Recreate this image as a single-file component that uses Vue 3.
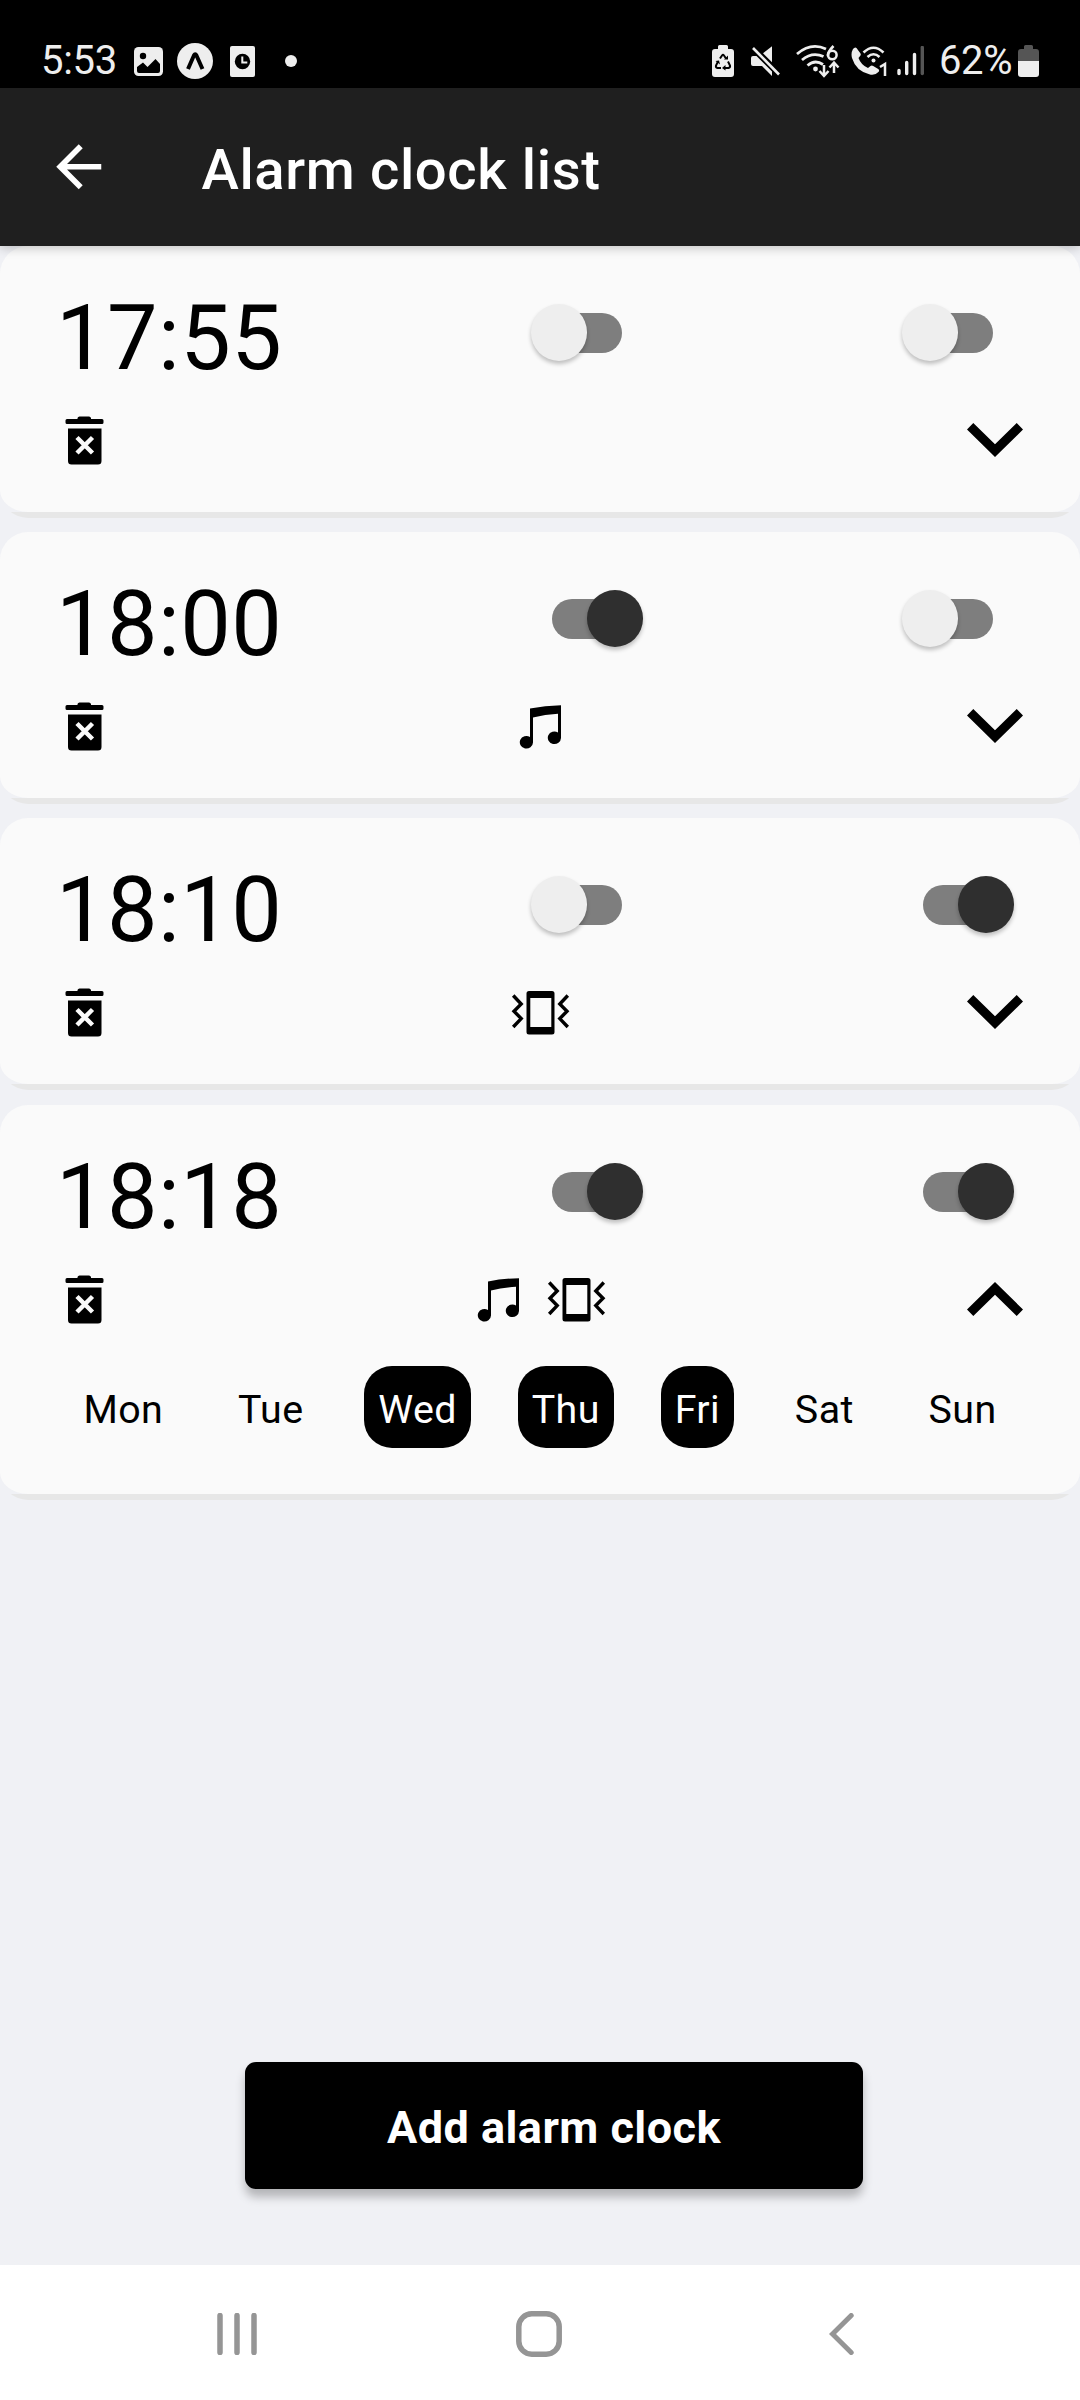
<script setup>
import { ref } from 'vue'

const alarms = ref([
  { time: '17:55', sound: false, vibrate: false, open: false },
  { time: '18:00', sound: true, vibrate: false, open: false },
  { time: '18:10', sound: false, vibrate: true, open: false },
  { time: '18:18', sound: true, vibrate: true, open: true, days: ['Wed', 'Thu', 'Fri'] },
])
const week = ['Mon', 'Tue', 'Wed', 'Thu', 'Fri', 'Sat', 'Sun']
</script>

<template>
  <div class="screen">
    <div class="status">
      <span class="clock">5:53</span>
      <svg class="s-image" width="29" height="29" viewBox="0 0 29 29">
        <rect width="29" height="29" rx="4.500" fill="#eee" />
        <circle cx="9" cy="9" r="3.200" fill="#000" />
        <path d="M3 20 9 15.500 13.500 20 21.500 12 26 17v7q0 2-2 2H5q-2 0-2-2z" fill="#000" />
      </svg>
      <svg class="s-expo" width="36" height="36" viewBox="0 0 36 36">
        <circle cx="18" cy="18" r="18" fill="#eee" />
        <path d="M11 26 17 12.300q1.200-2 2.400 0L25.500 26" fill="none" stroke="#000" stroke-width="4" />
      </svg>
      <svg class="s-app" width="25" height="31" viewBox="0 0 25 31">
        <rect width="25" height="31" rx="2" fill="#eee" />
        <circle cx="12.500" cy="15.500" r="7.700" fill="#000" />
        <path d="M12.300 10.500v6h5" fill="none" stroke="#eee" stroke-width="2" />
      </svg>
      <i class="s-dot"></i>
      <span class="fill"></span>
      <svg width="22" height="32" viewBox="0 0 22 32">
        <path d="M6 1.500Q6 0 7.500 0h7Q16 0 16 1.500V4h3q3 0 3 3v22q0 3-3 3H3q-3 0-3-3V7q0-3 3-3h3z" fill="#eee" />
        <path d="M8 13.500 10 10.500q1-1.300 2 0l2 3M16 16.500l2 4q.5 2-1.500 2.500h-4M9 23H5.500q-2-.5-1.500-2.500l2-4" fill="none" stroke="#000" stroke-width="2" />
        <path d="M12 14.500h4v-4zM13.500 20v5.500L10 23zM3.500 16l3.500-.5 1 4z" fill="#000" />
      </svg>
      <svg class="s-mute" width="30" height="30" viewBox="0 0 30 30">
        <path d="M0 12q0-2 2-2h3.500L21 25.500V30L11 20H2q-2 0-2-2zM12 7.200 21 .3v15.900z" fill="#eee" />
        <path d="M2 2 28 28.500" stroke="#eee" stroke-width="2.600" />
      </svg>
      <svg class="s-wifi" width="44" height="33" viewBox="0 0 44 33">
        <g fill="none" stroke="#eee" stroke-width="2.800">
          <path d="M1 9Q15-3 30 4" /><path d="M6 15Q16 6.500 27.500 11.500" /><path d="M11.500 20.500Q19 14 27 19.500" />
          <path d="M28 20v10M23.500 26l4.500 5 4.500-5M38 28V18M33.500 22.500l4.500-5 4.500 5" stroke-width="2.500" />
          <path d="M37.500 1Q31.500 7 32 11" stroke-width="2.600" /><circle cx="36.300" cy="10" r="4.300" stroke-width="2.500" />
        </g>
        <circle cx="19.500" cy="24" r="2.400" fill="#eee" />
      </svg>
      <svg class="s-call" width="37" height="32" viewBox="0 0 37 32">
        <path d="M2 4Q4 1.500 5.500 3l4 5.500q.8 1.500-.8 3L7.500 13q2.500 7 9.500 10l2.500-2q1.300-1 2.700 0l5 3q1.600 1.200.5 2.700-4 4.300-9.500 2.500Q5 26 1 13-.3 8 2 4z" fill="#eee" />
        <g fill="none" stroke="#eee" stroke-width="2.600">
          <path d="M12.500 7.500q10-9.500 20 0M16.500 12q6-5.500 12 0" />
        </g>
        <circle cx="22.500" cy="15.500" r="2" fill="#eee" />
        <path d="M29 22 34 19v12" fill="none" stroke="#eee" stroke-width="2.500" />
      </svg>
      <svg class="s-signal" width="28" height="30" viewBox="0 0 28 30">
        <g stroke="#eee" stroke-width="3.400" stroke-linecap="round">
          <path d="M2 24.500v3M9.700 16.500v11M17.500 8.500v19" /><path d="M25.300 1.500v26" stroke="#555" />
        </g>
      </svg>
      <span class="percent">62%</span>
      <svg width="21" height="32" viewBox="0 0 21 32">
        <path d="M6 1.500Q6 0 7.500 0h6Q15 0 15 1.500V4h3q3 0 3 3v9H0V7q0-3 3-3h3z" fill="#555" />
        <path d="M0 16h21v13q0 3-3 3H3q-3 0-3-3z" fill="#eee" />
      </svg>
    </div>

    <header class="bar">
      <svg class="back" viewBox="0 0 24 24"><path d="M20 11H7.830l5.590-5.590L12 4l-8 8 8 8 1.410-1.410L7.830 13H20z" fill="#fff" /></svg>
      <h1>Alarm clock list</h1>
    </header>

    <main class="list">
      <section v-for="a in alarms" :key="a.time" class="card" :class="{ open: a.open }">
        <div class="face">
          <div class="top">
            <span class="time">{{ a.time }}</span>
            <button class="switch" :class="{ on: a.sound }" @click="a.sound = !a.sound"><i class="knob"></i></button>
            <button class="switch" :class="{ on: a.vibrate }" @click="a.vibrate = !a.vibrate"><i class="knob"></i></button>
          </div>
          <div class="tools">
            <svg class="trash" width="39" height="49" viewBox="0 0 39 49">
              <path d="M12.500 3V2Q13 .5 14.500.5h9.500Q25.500.5 26 2v1h11q1.500 0 1.500 1.500v2Q38.500 8 37 8H2Q.5 8 .5 6.500v-2Q.5 3 2 3zM3 12.500h33.500V45q0 3.500-3.500 3.500H6.500Q3 48.500 3 45z" />
              <path d="M12 21.500 27.500 37M27.500 21.500 12 37" stroke="#fafafa" stroke-width="4.500" />
            </svg>
            <div class="modes" :class="{ pair: a.sound && a.vibrate }">
              <svg v-if="a.sound" width="78" height="44" viewBox="0 0 78 44">
                <path d="M29 3.500Q44 .4 60 .2V33a6.600 6.300 0 1 1-3-5.500V8.800Q44 9.500 32 12.500V37.500a6.600 6.300 0 1 1-3-5.500z" />
              </svg>
              <svg v-if="a.vibrate" width="78" height="44" viewBox="0 0 78 44">
                <path fill-rule="evenodd" d="M28 0h23q2.500 0 2.500 2.500v38.500q0 2.500-2.500 2.500H28q-2.500 0-2.500-2.500V2.500Q25.500 0 28 0zM29.300 7v29h21V7z" />
                <path d="M12.200 4.500 20.200 13l-7.200 7.300 7.200 7.300-8 8.400M66.800 4.500 58.800 13l7.200 7.300-7.200 7.300 8 8.400" fill="none" stroke="#000" stroke-width="3.400" />
              </svg>
            </div>
            <svg class="chevron" width="56" height="34" viewBox="0 0 56 34" @click="a.open = !a.open">
              <path d="M6.300 0 0 6.500 28 34 56 6.500 49.700 0 28 21.300z" />
            </svg>
          </div>
          <div v-if="a.open" class="days">
            <span v-for="d in week" :key="d" class="day" :class="{ picked: a.days?.includes(d) }">{{ d }}</span>
          </div>
        </div>
      </section>
    </main>

    <footer class="actions"><button class="add">Add alarm clock</button></footer>

    <nav class="nav">
      <svg width="40" height="42" viewBox="0 0 40 42"><path d="M3 2.500v37M20 2.500v37M37 2.500v37" stroke="#959595" stroke-width="5.500" stroke-linecap="round" /></svg>
      <svg class="home" width="46" height="46" viewBox="0 0 46 46"><rect x="2.800" y="2.800" width="40.400" height="40.400" rx="13" fill="none" stroke="#959595" stroke-width="5.500" /></svg>
      <svg width="25" height="42" viewBox="0 0 25 42"><path d="M22.200 2.500 3.500 21l18.700 18.500" fill="none" stroke="#959595" stroke-width="5" stroke-linecap="round" /></svg>
    </nav>
  </div>
</template>

<style>
body { margin: 0; }
</style>

<style scoped>
.screen {
  display: flex;
  flex-direction: column;
  width: 1080px;
  height: 2400px;
  overflow: hidden;
  background: #f0f1f5;
  color: #000;
  font-family: Roboto, "Liberation Sans", sans-serif;
}
svg { display: block; flex: none; }
button { border: 0; padding: 0; font-family: inherit; }

.status {
  display: flex;
  align-items: center;
  box-sizing: border-box;
  height: 88px;
  padding: 34px 41px 0 41px;
  background: #000;
  color: #eee;
  font-size: 40px;
}
.clock { width: 93px; line-height: 54px; letter-spacing: -0.3px; }
.s-expo { margin-left: 14px; }
.s-app { margin-left: 17px; }
.s-dot { width: 12px; height: 12px; margin-left: 30px; border-radius: 50%; background: #eee; }
.fill { flex: 1; }
.s-mute { margin-left: 17px; }
.s-wifi { margin-left: 15px; }
.s-call { margin-left: 11px; }
.s-signal { margin-left: 9px; }
.percent { width: 79px; margin-left: 14px; line-height: 54px; letter-spacing: -0.4px; white-space: nowrap; }

.bar {
  position: relative;
  z-index: 1;
  display: flex;
  align-items: center;
  height: 158px;
  padding-left: 45px;
  background: #1f1f1f;
  box-shadow: 0 2px 10px rgba(0, 0, 0, 0.22);
}
.back { width: 67.500px; height: 67.500px; }
h1 {
  margin: 5px 0 0 89px;
  color: #fff;
  font-size: 56.250px;
  font-weight: 500;
  line-height: 66px;
  letter-spacing: 0.6px;
}

.list { display: flex; flex-direction: column; gap: 14px; }
.card {
  border-radius: 28px;
  background: linear-gradient(transparent calc(100% - 6px), #e7e7e7 0);
}
.card.open { margin-top: 1px; }
.face {
  box-sizing: border-box;
  height: 266px;
  margin-bottom: 6px;
  padding-top: 36px;
  border-radius: 28px / 28px 28px 22px 22px;
  background: #fafafa;
}
.open .face { height: 389px; }
.top { display: flex; align-items: center; height: 101px; padding-left: 56px; }
.time {
  width: 474px;
  padding-top: 12px;
  font-size: 90px;
  line-height: 106px;
  letter-spacing: 0.4px;
}
.switch {
  position: relative;
  width: 114px;
  height: 57px;
  background: none;
}
.switch::before {
  content: "";
  position: absolute;
  inset: 8.500px 22px;
  border-radius: 20px;
  background: #7e7e7e;
}
.switch + .switch { margin-left: 257px; }
.knob {
  position: absolute;
  top: 0;
  left: 0.500px;
  width: 56.500px;
  height: 57px;
  border-radius: 50%;
  background: #eee;
  box-shadow: 0 3px 4px rgba(0, 0, 0, 0.24);
}
.on .knob { left: 56.500px; background: #2f2f2f; }

.tools {
  display: flex;
  align-items: flex-start;
  justify-content: space-between;
  height: 92px;
  padding: 33px 57px 0 65px;
}
.modes { display: flex; padding: 3px 0 0 8px; }
.pair { padding: 3px 6px 0 8px; }
.chevron { margin-top: 7px; }
.open .chevron { transform: rotate(180deg); }

.days { display: flex; justify-content: space-around; margin-top: -1px; padding: 0 46px 0 46px; }
.day {
  height: 82px;
  padding: 0 14px;
  border-radius: 28px;
  font-size: 39.375px;
  line-height: 87px;
  letter-spacing: 0.4px;
}
.picked { background: #000; color: #fff; }

.actions { display: flex; justify-content: center; margin-top: auto; padding: 0 0 76px 28px; }
.add {
  width: 618px;
  height: 127px;
  padding-top: 3px;
  border-radius: 11px;
  background: #000;
  color: #fff;
  font-size: 45px;
  font-weight: 700;
  letter-spacing: 0.45px;
  box-shadow: 0 8px 10px rgba(0, 0, 0, 0.25);
}
.nav {
  display: flex;
  align-items: center;
  justify-content: space-between;
  box-sizing: border-box;
  height: 135px;
  padding: 2px 226px 0 217px;
  background: #fff;
}
.home { margin-right: 9px; }
</style>
